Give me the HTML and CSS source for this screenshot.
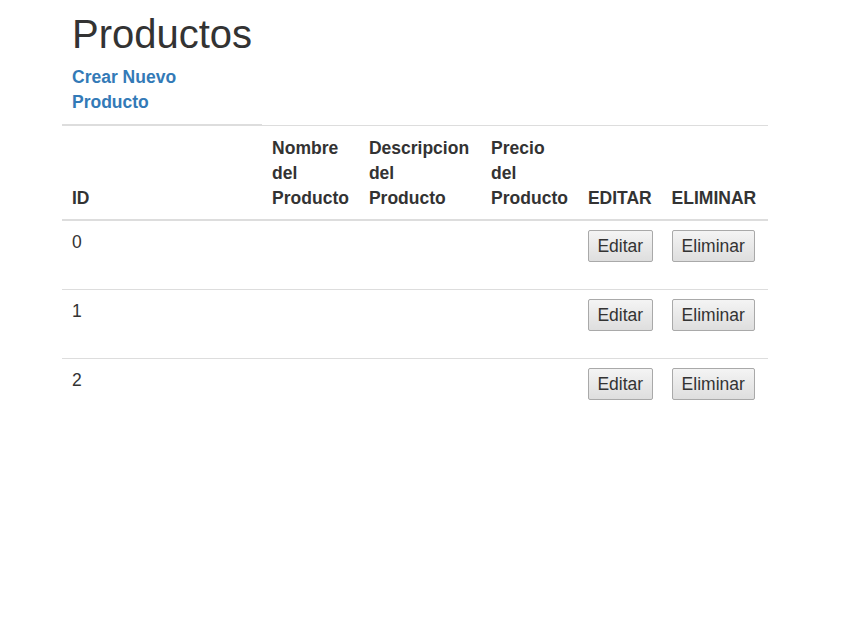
FILE: index.html
```html
<!DOCTYPE html>
<html lang="es">
<head>
<meta charset="utf-8">
<title>Productos</title>
<link rel="stylesheet" href="styles.css">
</head>
<body>
<div class="page">
  <table class="table">
    <thead>
      <tr class="title-row">
        <th class="title-cell">
          <h1 class="title">Productos</h1>
          <a class="create-link" href="#">Crear Nuevo Producto</a>
        </th>
      </tr>
      <tr class="head-row">
        <th>ID</th>
        <th>Nombre del Producto</th>
        <th class="wide-head">Descripcion del Producto</th>
        <th>Precio del Producto</th>
        <th class="edit-head">EDITAR</th>
        <th class="wide-head">ELIMINAR</th>
      </tr>
    </thead>
    <tbody>
      <tr>
        <td>0</td>
        <td></td>
        <td></td>
        <td></td>
        <td><form class="row-form"><button type="button" class="btn btn-edit">Editar</button></form></td>
        <td><form class="row-form"><button type="button" class="btn">Eliminar</button></form></td>
      </tr>
      <tr>
        <td>1</td>
        <td></td>
        <td></td>
        <td></td>
        <td><form class="row-form"><button type="button" class="btn btn-edit">Editar</button></form></td>
        <td><form class="row-form"><button type="button" class="btn">Eliminar</button></form></td>
      </tr>
      <tr>
        <td>2</td>
        <td></td>
        <td></td>
        <td></td>
        <td><form class="row-form"><button type="button" class="btn btn-edit">Editar</button></form></td>
        <td><form class="row-form"><button type="button" class="btn">Eliminar</button></form></td>
      </tr>
    </tbody>
  </table>
</div>
</body>
</html>
```

FILE: styles.css
```css
html, body {
  margin: 0;
  padding: 0;
  background: #fff;
}

body {
  font-family: "Liberation Sans", Arial, sans-serif;
  font-size: 17.5px;
  line-height: 25px;
  color: #333;
}

.page {
  padding-left: 62px;
}

.table {
  border-collapse: collapse;
  border-spacing: 0;
  width: min-content;
}

.title-cell {
  text-align: left;
  vertical-align: bottom;
  padding: 12px 10px 9px;
  border-bottom: 2px solid #ddd;
  font-weight: bold;
}

.title {
  margin: 0 0 9px;
  font-size: 40px;
  line-height: 44px;
  font-weight: 500;
  color: #333;
}

.create-link {
  color: #337ab7;
  text-decoration: none;
  font-weight: bold;
}

.head-row th {
  text-align: left;
  vertical-align: bottom;
  padding: 10px 10px 8px;
  border-top: 1px solid #ddd;
  border-bottom: 2px solid #ddd;
  font-weight: bold;
}

.head-row .wide-head {
  padding-right: 12px;
}

.head-row .edit-head {
  padding-right: 9px;
}

.table td {
  vertical-align: top;
  padding: 9px 9px 10px 10px;
  border-top: 1px solid #ddd;
}

.row-form {
  margin: 0 0 17px;
}

.btn {
  display: inline-block;
  font-family: "Liberation Sans", Arial, sans-serif;
  font-size: 17.5px;
  line-height: 24px;
  padding: 3px 9px;
  margin: 0;
  color: #333;
  background: linear-gradient(#f4f4f4, #dedede);
  border: 1px solid #a9a9a9;
  border-radius: 2px;
  white-space: nowrap;
}

.btn-edit {
  padding: 3px 8.5px;
}
```
